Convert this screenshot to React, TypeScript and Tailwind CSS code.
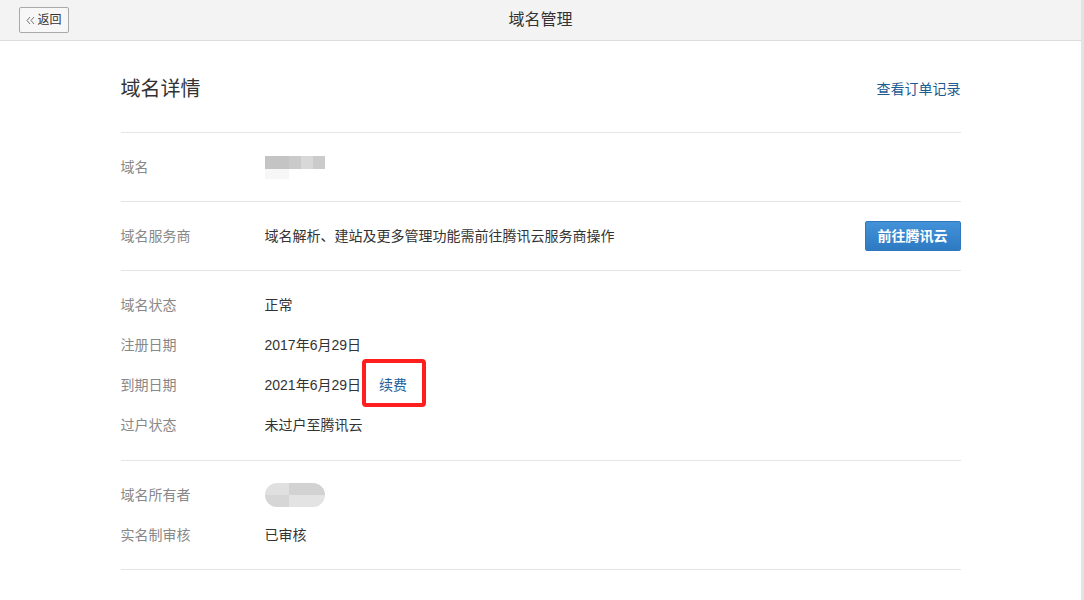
import React from "react";

const font = { fontFamily: '"Liberation Sans", "Noto Sans CJK SC", sans-serif' };

function Row({ label, children }: { label: string; children?: React.ReactNode }) {
  return (
    <div className="flex h-[40px] items-center text-[14px]">
      <div className="w-[144px] shrink-0 text-[#888]">{label}</div>
      <div className="flex items-center text-[#333]">{children}</div>
    </div>
  );
}

export default function App() {
  return (
    <div className="flex h-[600px] w-[1084px] overflow-hidden bg-white" style={font}>
      <div className="flex w-[1081px] flex-col">
        <div className="relative flex h-[41px] shrink-0 items-center justify-center border-b border-[#dcdcdc] bg-[#f3f3f3]">
          <button className="absolute left-[19px] top-[7px] flex h-[26px] w-[50px] items-center justify-center gap-[2px] rounded-[2px] border border-[#a9a9a9] bg-[#f7f7f7] text-[12px] text-[#333]">
            <svg width="9" height="9" viewBox="0 0 9 9" fill="none" stroke="#666" strokeWidth="0.9">
              <path d="M4 1 L1 4.5 L4 8" />
              <path d="M8 1 L5 4.5 L8 8" />
            </svg>
            <span>返回</span>
          </button>
          <span className="text-[16px] text-[#333]">域名管理</span>
        </div>

        <div className="mx-auto w-[840px]">
          <div className="flex items-center justify-between border-b border-[#e5e5e5] pb-[29px] pt-[34px]">
            <span className="text-[20px] leading-[28px] text-[#333]">域名详情</span>
            <a className="text-[14px] text-[#1c5a92]">查看订单记录</a>
          </div>

          <div className="flex h-[69px] items-center border-b border-[#e5e5e5] text-[14px]">
            <div className="w-[144px] shrink-0 text-[#888]">域名</div>
            <div className="flex flex-col">
              <div className="flex h-[13px]">
                <div className="w-[24px] bg-[#c4c4c4]" />
                <div className="w-[12px] bg-[#cacaca]" />
                <div className="w-[12px] bg-[#d8d8d8]" />
                <div className="w-[12px] bg-[#cbcbcb]" />
              </div>
              <div className="h-[10px] w-[24px] bg-[#f7f7f7]" />
            </div>
          </div>

          <div className="flex h-[69px] items-center justify-between border-b border-[#e5e5e5] text-[14px]">
            <div className="flex items-center">
              <div className="w-[144px] shrink-0 text-[#888]">域名服务商</div>
              <div className="text-[#333]">域名解析、建站及更多管理功能需前往腾讯云服务商操作</div>
            </div>
            <button className="flex h-[30px] w-[96px] items-center justify-center rounded-[2px] border border-[#2f78bd] bg-gradient-to-b from-[#4392d8] to-[#2d7ac2] text-[14px] font-bold text-white">
              前往腾讯云
            </button>
          </div>

          <div className="border-b border-[#e5e5e5] pb-[15px] pt-[14px]">
            <Row label="域名状态">正常</Row>
            <Row label="注册日期">2017年6月29日</Row>
            <Row label="到期日期">
              <span>2021年6月29日</span>
              <span className="relative ml-[18px] text-[#1f5f9c]">
                续费
                <span className="absolute left-[-17px] top-[-16px] h-[48px] w-[64px] rounded-[4px] border-4 border-[#ff1f1f]" />
              </span>
            </Row>
            <Row label="过户状态">未过户至腾讯云</Row>
          </div>

          <div className="border-b border-[#e5e5e5] pb-[14px] pt-[14px]">
            <Row label="域名所有者">
              <div className="flex h-[24px] w-[60px] flex-col overflow-hidden rounded-full">
                <div className="flex h-[12px]">
                  <div className="w-[24px] bg-[#e0e0e0]" />
                  <div className="w-[36px] bg-[#d2d2d2]" />
                </div>
                <div className="flex h-[12px]">
                  <div className="w-[24px] bg-[#d6d6d6]" />
                  <div className="w-[36px] bg-[#e3e3e3]" />
                </div>
              </div>
            </Row>
            <Row label="实名制审核">已审核</Row>
          </div>
        </div>
      </div>
      <div className="w-[3px] bg-[#e3e3e3]" />
    </div>
  );
}
